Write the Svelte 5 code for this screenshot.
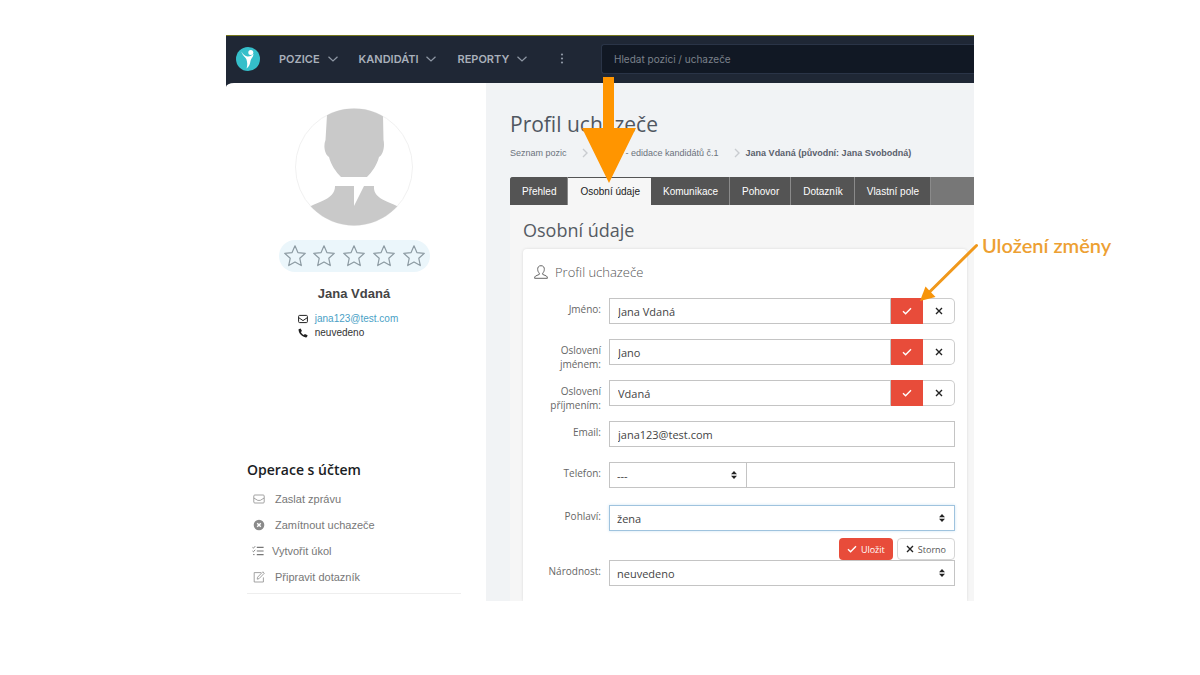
<script lang="ts">
  const menu = ["POZICE", "KANDIDÁTI", "REPORTY"];
  const tabs = ["Přehled", "Osobní údaje", "Komunikace", "Pohovor", "Dotazník", "Vlastní pole"];
  const operations = [
    { icon: "mail", label: "Zaslat zprávu" },
    { icon: "reject", label: "Zamítnout uchazeče" },
    { icon: "tasks", label: "Vytvořit úkol" },
    { icon: "edit", label: "Připravit dotazník" }
  ];
  let activeTab = $state("Osobní údaje");
  let names = $state([
    { id: "name", label: "Jméno:", value: "Jana Vdaná" },
    { id: "first", label: "Oslovení jménem:", value: "Jano" },
    { id: "last", label: "Oslovení příjmením:", value: "Vdaná" }
  ]);
  let email = $state("jana123@test.com");
</script>

{#snippet check()}
  <svg width="10" height="8" viewBox="0 0 10 8" fill="none" aria-hidden="true">
    <path d="M1 4.2L3.6 6.7L9 1.2" stroke="#fff" stroke-width="1.4" />
  </svg>
{/snippet}

{#snippet cross()}
  <svg width="8" height="8" viewBox="0 0 8 8" fill="none" aria-hidden="true">
    <path d="M1 1L7 7M7 1L1 7" stroke="#222" stroke-width="1.4" />
  </svg>
{/snippet}

{#snippet sort()}
  <svg class="sort" width="6" height="8" viewBox="0 0 6 8" aria-hidden="true">
    <path d="M3 0L6 3.2H0zM3 8L0 4.8H6z" fill="#222" />
  </svg>
{/snippet}

{#snippet separator()}
  <svg width="6" height="10" viewBox="0 0 6 10" fill="none" aria-hidden="true">
    <path d="M1 1L5 5L1 9" stroke="#c9ccd0" stroke-width="1.4" />
  </svg>
{/snippet}

<div class="frame">
  <header class="topbar">
    <a href="#home" class="logo" aria-label="Domů">
      <svg width="24" height="24" viewBox="0 0 24 24">
        <circle cx="12" cy="12" r="12" fill="#35bfca" />
        <circle cx="14.8" cy="5.6" r="2.5" fill="#fff" />
        <path d="M5.4 4.6C7.2 8 9.2 9.2 11.4 9.4C14 9.6 16 8.2 17.6 7C17 10.4 15.2 11.4 14.6 13.4C14 16 14 18.6 10.6 21.4C11.6 18 11.4 15 10.4 12.2C9.6 10.2 6.4 9 5.4 4.6Z" fill="#fff" />
      </svg>
    </a>
    <nav>
      {#each menu as item}
        <button class="menu-item">
          {item}
          <svg width="10" height="6" viewBox="0 0 10 6" fill="none">
            <path d="M0.5 0.7L5 5L9.5 0.7" stroke="#8f98a5" stroke-width="1.2" />
          </svg>
        </button>
      {/each}
      <button class="more" aria-label="Další">
        <svg width="4" height="11" viewBox="0 0 4 11" fill="#8f98a5">
          <circle cx="2" cy="1.5" r="1.1" />
          <circle cx="2" cy="5.5" r="1.1" />
          <circle cx="2" cy="9.5" r="1.1" />
        </svg>
      </button>
    </nav>
    <input class="search" type="search" placeholder="Hledat pozici / uchazeče" aria-label="Hledat" />
  </header>

  <div class="body">
    <aside>
      <svg class="avatar" width="118" height="118" viewBox="0 0 118 118">
        <defs>
          <clipPath id="round"><circle cx="59" cy="59" r="58.5" /></clipPath>
        </defs>
        <circle cx="59" cy="59" r="58.5" fill="none" stroke="#f1f1f1" />
        <g clip-path="url(#round)" fill="#c9c9c9">
          <path d="M32 7C42 -2 78 -2 88 7L88.5 32C90 38 88 47 84 49C82 57 77 64 72 69H46C41 64 36 57 34 49C30 47 28 38 30.5 32Z" />
          <path d="M40 78H59V98L69 78H79C78 90 90 92 104 99V118H14V99C28 92 40 90 40 78Z" />
        </g>
      </svg>
      <div class="stars">
        {#each [1, 2, 3, 4, 5] as n}
          <button aria-label="Hodnocení {n}">
            <svg width="22" height="22" viewBox="0 0 22 22" fill="none">
              <path d="M11 0.8L13.9 7.6L21.3 8.3L15.8 13.3L17.3 20.6L11 16.9L4.7 20.6L6.2 13.3L0.7 8.3L8.1 7.6Z" stroke="#8d9ba3" stroke-width="1.2" stroke-linejoin="round" />
            </svg>
          </button>
        {/each}
      </div>
      <h3>Jana Vdaná</h3>
      <ul class="contacts">
        <li>
          <svg width="10" height="10" viewBox="0 0 10 10" fill="none" stroke="#222">
            <rect x="0.6" y="1.4" width="8.8" height="7.2" rx="1" />
            <path d="M0.6 3.6L5 6.6L9.4 3.6" />
          </svg>
          <a href="mailto:jana123@test.com">jana123@test.com</a>
        </li>
        <li>
          <svg width="10" height="10" viewBox="0 0 10 10" fill="#222">
            <path d="M0.6 1.2L2.6 0.4L4 3L2.9 4.1C3.4 5.3 4.5 6.5 5.8 7.1L6.9 5.9L9.6 7.3L8.9 9.3C5 10.3 0 5.2 0.6 1.2Z" />
          </svg>
          <span>neuvedeno</span>
        </li>
      </ul>

      <section class="operations">
        <h2>Operace s účtem</h2>
        <ul>
          {#each operations as op}
            <li>
              <a href="#{op.icon}" class={op.icon}>
                <svg width="12" height="12" viewBox="0 0 12 12" fill="none" stroke="#999" stroke-width="0.9">
                  {#if op.icon === "mail"}
                    <rect x="0.8" y="2" width="10.4" height="8" rx="1" />
                    <path d="M0.8 5L4.8 7.4H7.2L11.2 5" />
                  {:else if op.icon === "reject"}
                    <circle cx="6" cy="6" r="5.3" fill="#8a8a8a" stroke="none" />
                    <path d="M4.2 4.2L7.8 7.8M7.8 4.2L4.2 7.8" stroke="#fff" stroke-width="1.4" />
                  {:else if op.icon === "tasks"}
                    <path d="M4.8 2.4H11.6M4.8 6H11.6M4.8 9.6H11.6" stroke="#777" stroke-width="1.1" />
                    <path d="M0.5 2.4L1.4 3.2L3.2 1.2M0.5 6L1.4 6.8L3.2 4.8M1 9.6H2.6" stroke="#777" />
                  {:else}
                    <path d="M8 1.6H1.2V11H10.4V6.4" />
                    <path d="M4.2 8.2L4.6 6.2L9.8 0.8L11.3 2.2L6.1 7.6Z" />
                  {/if}
                </svg>
                {op.label}
              </a>
            </li>
          {/each}
        </ul>
      </section>
    </aside>

    <main>
      <h1>Profil uchazeče</h1>
      <ol class="breadcrumb">
        <li><a href="#positions">Seznam pozic</a>{@render separator()}</li>
        <li class="position"><a href="#position">- edidace kandidátů č.1</a>{@render separator()}</li>
        <li><strong>Jana Vdaná (původní: Jana Svobodná)</strong></li>
      </ol>

      <div class="tabs" role="tablist">
        {#each tabs as tab}
          <button role="tab" class:active={tab === activeTab} aria-selected={tab === activeTab} onclick={() => activeTab = tab}>
            {tab}
          </button>
        {/each}
      </div>

      <div class="panel">
        <h2>Osobní údaje</h2>
        <form class="card" onsubmit={(e) => e.preventDefault()}>
          <h3>
            <svg width="14" height="14" viewBox="0 0 14 14" fill="none" stroke="#666">
              <path d="M7 0.7C4.4 0.7 3.5 2.6 3.7 4.6C3.8 6.3 4.5 7.4 5.3 8.1V9.4L1.6 11C0.9 11.4 0.6 12.2 0.6 13.3H13.4C13.4 12.2 13.1 11.4 12.4 11L8.7 9.4V8.1C9.5 7.4 10.2 6.3 10.3 4.6C10.5 2.6 9.6 0.7 7 0.7Z" />
            </svg>
            Profil uchazeče
          </h3>

          {#each names as field}
            <div class="row">
              <label for={field.id}>{field.label}</label>
              <div class="group">
                <input id={field.id} type="text" bind:value={field.value} />
                <button class="save" aria-label="Uložit">{@render check()}</button>
                <button class="cancel" type="button" aria-label="Storno">{@render cross()}</button>
              </div>
            </div>
          {/each}

          <div class="row">
            <label for="email">Email:</label>
            <div class="group">
              <input id="email" type="text" bind:value={email} />
            </div>
          </div>

          <div class="row phone">
            <label for="prefix">Telefon:</label>
            <div class="group">
              <div class="select prefix">
                <select id="prefix"><option>---</option></select>
                {@render sort()}
              </div>
              <input type="tel" aria-label="Telefonní číslo" />
            </div>
          </div>

          <div class="row">
            <label for="gender">Pohlaví:</label>
            <div>
              <div class="select focused">
                <select id="gender"><option>žena</option><option>muž</option></select>
                {@render sort()}
              </div>
              <div class="actions">
                <button class="save">{@render check()}Uložit</button>
                <button class="cancel" type="button">{@render cross()}Storno</button>
              </div>
            </div>
          </div>

          <div class="row last">
            <label for="nationality">Národnost:</label>
            <div class="select">
              <select id="nationality"><option>neuvedeno</option></select>
              {@render sort()}
            </div>
          </div>
        </form>
      </div>
    </main>
  </div>

  <!-- callouts over the page -->
  <svg class="arrow-tab" width="54" height="106" viewBox="0 0 54 106" aria-hidden="true">
    <path d="M21 0H32V51H54L27 106L0 51H21Z" fill="#ff9500" />
  </svg>
  <svg class="arrow-save" width="58" height="58" viewBox="0 0 58 58" aria-hidden="true">
    <path d="M56.5 2.5L9 49.5" stroke="#f0981b" stroke-width="3" stroke-linecap="round" />
    <path d="M0 58L5.5 43.5L15.5 54Z" fill="#f7940a" />
  </svg>
  <p class="note">Uložení změny</p>
</div>

<style>
:global(body) {
  margin: 0;
  background: #fff;
}

.frame {
  --sans: "Liberation Sans", Arial, sans-serif;
  --open: "Open Sans", "Noto Sans", sans-serif;
  position: relative;
  margin: 35px 226px 0;
  background: #1f2735;
  font-family: var(--sans);
  font-size: 10px;
}

h1, h2, h3, p, ul, ol {
  margin: 0;
  padding: 0;
  font-weight: 400;
}

ul, ol {
  list-style: none;
}

a {
  color: inherit;
  text-decoration: none;
}

svg {
  display: block;
  flex: none;
}

button, input, select {
  box-sizing: border-box;
  margin: 0;
  border: 0;
  padding: 0;
  background: none;
  font: inherit;
  color: inherit;
}

.topbar {
  box-sizing: border-box;
  display: flex;
  align-items: center;
  height: 48px;
  padding: 0 0 2px 10px;
  border-top: 1px solid #77781c;
  font-family: Inter, sans-serif;
}

.topbar nav {
  display: flex;
  align-items: center;
  gap: 21px;
  width: 347px;
  flex: none;
  padding-left: 19px;
  box-sizing: border-box;
}

.logo {
  flex: none;
}

.menu-item {
  display: flex;
  align-items: center;
  gap: 8px;
  font-size: 11px;
  font-weight: 600;
  color: #a9b0bb;
}

.more {
  margin-left: 12px;
}

.search {
  flex: 1;
  min-width: 0;
  height: 30px;
  margin-left: -6px;
  padding: 0 12px;
  border: 1px solid #2a3447;
  border-right: 0;
  border-radius: 3px 0 0 3px;
  background: #111824;
  color: #cfd3da;
  font-size: 10px;
}

.search::placeholder {
  color: #7b818b;
  opacity: 1;
}

.body {
  display: flex;
}

aside {
  box-sizing: border-box;
  flex: none;
  width: 260px;
  padding: 25px 25px 7px 21px;
  display: flex;
  flex-direction: column;
  align-items: center;
  background: #fff;
  border-top-left-radius: 8px 4px;
}

.stars {
  display: flex;
  align-items: center;
  justify-content: space-between;
  box-sizing: border-box;
  width: 151px;
  height: 32px;
  margin-top: 14px;
  padding: 0 5px;
  border-radius: 16px;
  background: #ebf6fb;
}

aside h3 {
  margin-top: 13px;
  font-size: 13px;
  font-weight: 700;
  line-height: 18px;
  color: #444;
}

.contacts {
  margin-top: 9px;
  padding-right: 12px;
  line-height: 14px;
  color: #333;
}

.contacts li {
  display: flex;
  align-items: center;
  gap: 7px;
}

.contacts a {
  color: #4a9fc6;
}

.operations {
  align-self: stretch;
  margin-top: 120px;
  border-bottom: 1px solid #eee;
  padding-bottom: 3px;
}

.operations h2 {
  font-family: var(--open);
  font-size: 14px;
  line-height: 20px;
  font-weight: 600;
  color: #1a1d24;
}

.operations ul {
  margin-top: 6px;
}

.operations a {
  display: flex;
  align-items: center;
  gap: 10px;
  height: 26px;
  padding-left: 6px;
  font-size: 11px;
  color: #777;
}

.operations a.tasks {
  padding-left: 5px;
  gap: 8px;
}

main {
  flex: 1;
  min-width: 0;
  display: flex;
  flex-direction: column;
  padding: 26px 0 0 24px;
  background: #f1f3f5;
}

h1 {
  font-family: var(--open);
  font-size: 21px;
  line-height: 30px;
  color: #505761;
}

.breadcrumb {
  display: flex;
  margin-top: 7px;
  line-height: 14px;
  font-size: 9px;
  white-space: nowrap;
  color: #6b727c;
}

.breadcrumb li {
  display: flex;
  align-items: center;
  gap: 15px;
  margin-right: 6px;
}

.breadcrumb .position {
  padding-left: 32px;
}

.breadcrumb strong {
  color: #59606c;
}

.tabs {
  display: flex;
  height: 28px;
  margin-top: 17px;
  overflow: hidden;
  border-top-left-radius: 3px;
  background: #777;
}

.tabs button {
  padding: 0 11px 0 12px;
  border-right: 1px solid #8a8a8a;
  background: #545454;
  color: #fff;
  white-space: nowrap;
}

.tabs button.active {
  border-top: 1px solid #545454;
  border-right: 0;
  background: #f6f6f6;
  color: #222;
}

.panel {
  flex: 1;
  display: flex;
  flex-direction: column;
  padding: 13px 7px 0 13px;
  background: #f6f6f6;
}

.panel h2 {
  font-family: var(--open);
  font-size: 18px;
  line-height: 24px;
  color: #555b63;
}

.card {
  flex: 1;
  margin-top: 7px;
  padding: 12px 12px 15px 11px;
  border-radius: 4px 4px 0 0;
  background: #fff;
  box-shadow: 0 0 3px rgba(0, 0, 0, 0.12);
  clip-path: inset(-4px -4px 0 -4px);
  font-family: var(--open);
  color: #555;
}

.card h3 {
  display: flex;
  align-items: center;
  gap: 7px;
  margin-bottom: 15px;
  font-size: 13px;
  font-weight: 300;
  line-height: 22px;
  color: #555;
}

.row {
  display: grid;
  grid-template-columns: 67px 1fr;
  column-gap: 8px;
  align-items: start;
  min-height: 41px;
}

.row.phone {
  min-height: 43px;
}

.row.last {
  min-height: 26px;
}

.row label {
  padding-top: 4px;
  text-align: right;
  font-size: 10px;
  line-height: 14px;
  color: #666;
}

.group {
  display: flex;
}

.group input, .select select {
  height: 26px;
  border: 1px solid #c4c4c4;
  background: #fff;
  font-size: 11px;
  color: #444;
}

.group input {
  flex: 1;
  min-width: 0;
  padding: 0 8px;
}

.group button {
  display: grid;
  place-items: center;
  width: 32px;
  height: 26px;
}

.group .save, .actions .save {
  background: #e84c3a;
  color: #fff;
}

.group .cancel {
  border: 1px solid #ccc;
  border-left: 0;
  border-radius: 0 5px 5px 0;
}

.select {
  position: relative;
}

.select select {
  display: block;
  width: 100%;
  padding: 0 7px;
  appearance: none;
}

.select.prefix {
  flex: 0 0 40%;
}

.prefix + input {
  border-left: 0;
}

.select :global(.sort) {
  position: absolute;
  top: 9px;
  right: 10px;
  pointer-events: none;
}

.select.focused select {
  border-color: #9fc3de;
  box-shadow: 0 0 3px #cfe4f3;
  outline: 0;
}

.actions {
  display: flex;
  justify-content: flex-end;
  gap: 4px;
  padding-top: 7px;
}

.actions button {
  display: flex;
  align-items: center;
  gap: 4px;
  height: 22px;
  padding: 0 8px;
  border-radius: 4px;
  font-size: 9px;
}

.actions .cancel {
  border: 1px solid #d6d6d6;
}

.arrow-tab {
  position: absolute;
  top: 42px;
  left: 356px;
}

.arrow-save {
  position: absolute;
  top: 208px;
  right: -4px;
}

.note {
  position: absolute;
  top: 198px;
  left: calc(100% + 8px);
  font-family: Lato, sans-serif;
  font-size: 20px;
  font-weight: 600;
  line-height: 24px;
  white-space: nowrap;
  color: #eda032;
}
</style>
